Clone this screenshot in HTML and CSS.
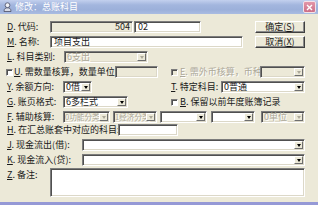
FILE: index.html
```html
<!DOCTYPE html>
<html>
<head>
<meta charset="utf-8">
<link rel="stylesheet" href="styles.css">
</head>
<body>
<div class="window">
  <div class="titlebar">
    <svg class="ticon" width="9" height="10" viewBox="0 0 9 10">
      <path d="M1 9.5 C1 6.5 2.5 5.8 4.5 5.8 C6.5 5.8 8 6.5 8 9.5 Z" fill="#d8dce8" stroke="#4a4e66" stroke-width="0.8"/>
      <circle cx="4.5" cy="3.2" r="2.4" fill="#eef0f6" stroke="#4a4e66" stroke-width="0.8"/>
    </svg>
    <span class="title">修改：总账科目</span>
    <span class="close">
      <svg width="7" height="7" viewBox="0 0 7 7"><path d="M1 1 L6 6 M6 1 L1 6" stroke="#fff" stroke-width="1.4"/></svg>
    </span>
  </div>
  <div class="content">
    <div class="row">
      <span class="lbl w43"><u>D</u>. 代码:</span>
      <div class="field ro num w83">504</div>
      <div class="field w67 ml1">02</div>
      <button class="btn">确定(<u>S</u>)</button>
    </div>
    <div class="row">
      <span class="lbl w43"><u>M</u>. 名称:</span>
      <div class="field w193">项目支出</div>
      <button class="btn">取消(<u>X</u>)</button>
    </div>
    <div class="row">
      <span class="lbl w57"><u>L</u>. 科目类别:</span>
      <div class="combo dis w84"><span class="val">6支出</span><span class="arrow"></span></div>
    </div>
    <div class="row">
      <span class="chk"></span>
      <span class="lbl w101"><u>U</u>. 需数量核算，数量单位:</span>
      <div class="field ro w43"></div>
      <div class="right">
        <span class="chk dis"></span>
        <span class="lbl dis w80"><u>E</u>. 需外币核算，币种:</span>
        <div class="combo dis grow"><span class="val"></span><span class="arrow"></span></div>
      </div>
    </div>
    <div class="row">
      <span class="lbl w56"><u>Y</u>. 余额方向:</span>
      <div class="combo w29"><span class="val">0借</span><span class="arrow"></span></div>
      <div class="right">
        <span class="lbl w50"><u>T</u>. 特定科目:</span>
        <div class="combo grow"><span class="val">0普通</span><span class="arrow"></span></div>
      </div>
    </div>
    <div class="row">
      <span class="lbl w56"><u>G</u>. 账页格式:</span>
      <div class="combo w65"><span class="val">6多栏式</span><span class="arrow"></span></div>
      <div class="right">
        <span class="chk"></span>
        <span class="lbl"><u>B</u>. 保留以前年度账簿记录</span>
      </div>
    </div>
    <div class="row">
      <span class="lbl w56"><u>F</u>. 辅助核算:</span>
      <div class="combo dis w47"><span class="val sm">0功能分类</span><span class="arrow"></span></div>
      <div class="combo dis w44 ml3"><span class="val sm">1经济分类</span><span class="arrow"></span></div>
      <div class="combo w47 ml3"><span class="val"></span><span class="arrow"></span></div>
      <div class="combo w44 ml4"><span class="val"></span><span class="arrow"></span></div>
      <div class="combo dis w44 ml6"><span class="val">0单位</span><span class="arrow"></span></div>
    </div>
    <div class="row up2">
      <span class="lbl w111"><u>H</u>. 在汇总账套中对应的科目:</span>
      <div class="field w60"></div>
    </div>
    <div class="row">
      <span class="lbl w75"><u>J</u>. 现金流出(借):</span>
      <div class="combo grow"><span class="val"></span><span class="arrow"></span></div>
    </div>
    <div class="row">
      <span class="lbl w75"><u>K</u>. 现金流入(贷):</span>
      <div class="combo grow"><span class="val"></span><span class="arrow"></span></div>
    </div>
    <div class="row memo-row">
      <span class="lbl w43 top"><u>Z</u>. 备注:</span>
      <div class="field memo grow"></div>
    </div>
  </div>
</div>
</body>
</html>
```

FILE: styles.css
```css
* { box-sizing: border-box; }
html, body { margin: 0; padding: 0; }
body {
  width: 318px;
  height: 205px;
  overflow: hidden;
  background: #ece9d8;
  font-family: "Noto Sans CJK SC", "Liberation Sans", sans-serif;
  font-size: 9px;
  color: #1a1a1a;
}
.window {
  height: 205px;
  display: flex;
  flex-direction: column;
  border-bottom: 3px solid #9599d6;
}
.titlebar {
  height: 14px;
  flex: none;
  display: flex;
  align-items: center;
  padding-left: 3px;
  background: linear-gradient(#c3d0ee, #a3b6de 35%, #9cb0da 70%, #aabce2);
}
.ticon { display: block; }
.title {
  color: #fff;
  margin-left: 3px;
  line-height: 14px;
  font-size: 9px;
}
.close {
  margin-left: auto;
  margin-right: 2px;
  width: 13px;
  height: 12px;
  background: linear-gradient(#e296a8, #cc6f88);
  border: 1px solid #f4e2e8;
  border-radius: 2px;
  display: flex;
  align-items: center;
  justify-content: center;
}
.close svg { display: block; }
.content {
  flex: 1;
  display: flex;
  flex-direction: column;
  gap: 3px;
  padding: 7px 13px 0 7px;
}
.row {
  display: flex;
  align-items: center;
  height: 12px;
  flex: none;
}
.up2 { margin-top: -2px; }
.memo-row { height: 29px; align-items: flex-start; margin-top: -1px; }
.lbl {
  flex: none;
  white-space: nowrap;
  line-height: 12px;
}
.lbl.top { line-height: 11px; padding-top: 1px; }
.lbl.dis { color: #aca899; text-shadow: 1px 1px 0 #fff; }
u { text-decoration: underline; }

.w29 { width: 29px; }
.w43 { width: 43px; }
.w44 { width: 44px; }
.w47 { width: 47px; }
.w50 { width: 50px; }
.w56 { width: 56px; }
.w57 { width: 57px; }
.w60 { width: 60px; }
.w65 { width: 65px; }
.w67 { width: 67px; }
.w75 { width: 75px; }
.w80 { width: 80px; }
.w83 { width: 83px; }
.w84 { width: 84px; }
.w101 { width: 101px; }
.w111 { width: 111px; }
.w193 { width: 193px; }
.ml1 { margin-left: 1px; }
.ml3 { margin-left: 3px; }
.ml4 { margin-left: 4px; }
.ml6 { margin-left: 6px; }
.grow { flex: 1; }

.field, .combo {
  flex: none;
  height: 12px;
  background: #fff;
  border: 1px solid;
  border-color: #7c7c7c #fff #fff #7c7c7c;
  box-shadow: inset 1px 1px 0 #505050, inset -1px -1px 0 #dcd8c8;
  line-height: 10px;
  padding: 0 2px 0 3px;
  white-space: nowrap;
}
.field.grow, .combo.grow { flex: 1; }
.field.ro { background: #ece9d8; }
.field.num { text-align: right; }
.field.memo { height: 29px; }

.combo {
  display: flex;
  padding: 0;
}
.combo .val {
  flex: 1;
  min-width: 0;
  padding-left: 2px;
  line-height: 10px;
  white-space: nowrap;
}
.combo .val.sm { font-size: 7.6px; padding-left: 1px; }
.combo .arrow {
  flex: none;
  width: 9px;
  height: 8px;
  margin: 1px 1px 1px 0;
  background: #ece9d8;
  border: 1px solid;
  border-color: #fff #6e6e6e #6e6e6e #fff;
  display: flex;
  align-items: center;
  justify-content: center;
}
.combo .arrow::after {
  content: "";
  width: 0;
  height: 0;
  border-left: 2px solid transparent;
  border-right: 2px solid transparent;
  border-top: 3px solid #000;
}
.combo.dis { background: #ece9d8; }
.combo.dis .val { color: #aca899; text-shadow: 1px 1px 0 #fff; }
.combo.dis .arrow::after { border-top-color: #aca899; }

.btn {
  flex: none;
  margin-left: auto;
  width: 50px;
  height: 12px;
  padding: 0;
  font-family: inherit;
  font-size: 9px;
  line-height: 10px;
  color: #1a1a1a;
  background: #ece9d8;
  border: 1px solid;
  border-color: #fff #404040 #404040 #fff;
  box-shadow: inset -1px -1px 0 #8a8a8a;
  display: flex;
  align-items: center;
  justify-content: center;
}

.chk {
  flex: none;
  width: 7px;
  height: 7px;
  margin-left: -1px;
  margin-right: 1px;
  background: #fff;
  border: 1px solid;
  border-color: #7c7c7c #fff #fff #7c7c7c;
  box-shadow: inset 1px 1px 0 #505050;
}
.chk.dis { background: #ece9d8; }
.right .chk { margin-left: 0; margin-right: 2px; }

.right {
  margin-left: auto;
  width: 134px;
  display: flex;
  align-items: center;
  height: 12px;
}
```
